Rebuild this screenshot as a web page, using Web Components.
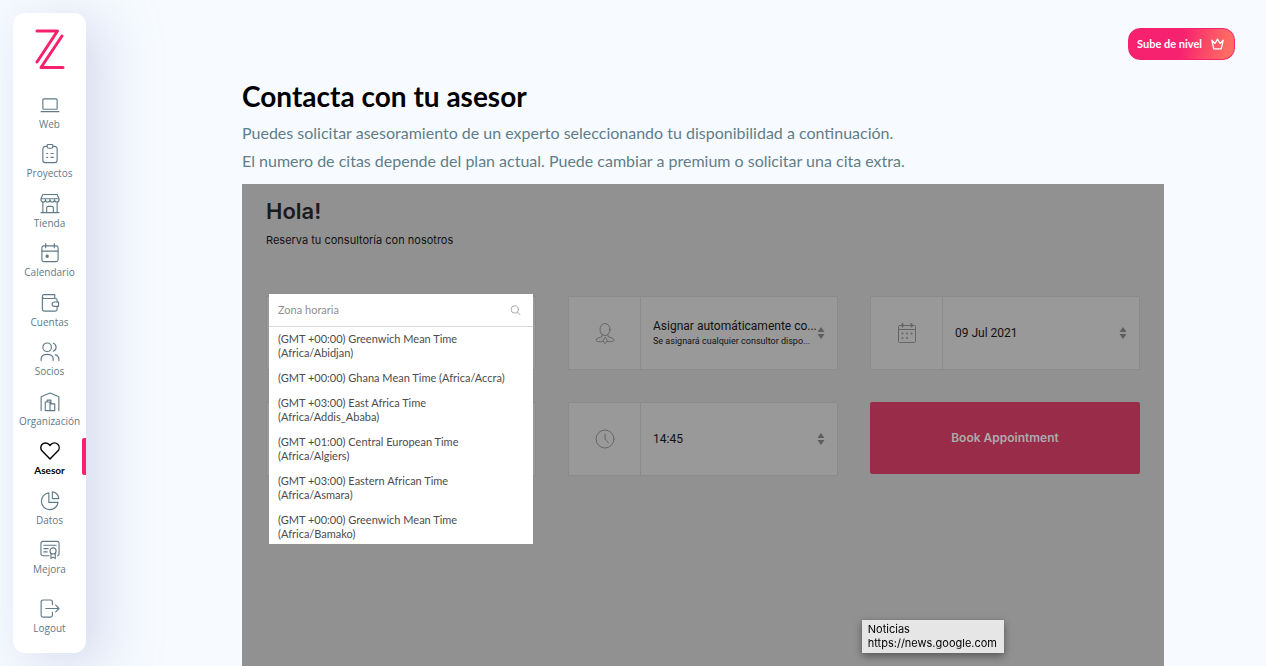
<!DOCTYPE html>
<html lang="es">
<head>
<meta charset="utf-8">
<title>Contacta con tu asesor</title>
<style>
  body { margin: 0; background: #f7fbff; font-family: Lato, "Open Sans", sans-serif; }
</style>
</head>
<body>
<app-shell>
  <side-bar slot="sidebar">
    <nav-item icon="web">Web</nav-item>
    <nav-item icon="proyectos">Proyectos</nav-item>
    <nav-item icon="tienda">Tienda</nav-item>
    <nav-item icon="calendario">Calendario</nav-item>
    <nav-item icon="cuentas">Cuentas</nav-item>
    <nav-item icon="socios">Socios</nav-item>
    <nav-item icon="organizacion">Organización</nav-item>
    <nav-item icon="asesor" active>Asesor</nav-item>
    <nav-item icon="datos">Datos</nav-item>
    <nav-item icon="mejora">Mejora</nav-item>
    <nav-item icon="logout" slot="footer">Logout</nav-item>
  </side-bar>
  <level-button slot="action">Sube de nivel</level-button>
  <page-heading>
    <span slot="title">Contacta con tu asesor</span>
    <p>Puedes solicitar asesoramiento de un experto seleccionando tu disponibilidad a continuación.</p>
    <p>El numero de citas depende del plan actual. Puede cambiar a premium o solicitar una cita extra.</p>
  </page-heading>
  <booking-panel>
    <span slot="title">Hola!</span>
    <span slot="intro">Reserva tu consultoría con nosotros</span>
    <booking-field label="Servicio"><zone-picker slot="popup"></zone-picker></booking-field>
    <booking-field icon="person" label="Consultor" value="Asignar automáticamente co..." note="Se asignará cualquier consultor dispo..."></booking-field>
    <booking-field icon="date" label="Fecha" value="09 Jul 2021"></booking-field>
    <booking-field label="Zona horaria"></booking-field>
    <booking-field icon="clock" label="Hora" value="14:45"></booking-field>
    <book-button>Book Appointment</book-button>
  </booking-panel>
</app-shell>
<link-tip>
  <span slot="title">Noticias</span>
  <span>https://news.google.com</span>
</link-tip>

<script>
const ICONS = {
  web: '<rect x="2.5" y="4" width="15" height="11" rx="1"/><path d="M.7 17.500h18.600"/>',
  proyectos: '<path d="M6.500 2.500H5A2.500 2.500 0 0 0 2.500 5v12A2.500 2.500 0 0 0 5 19.500h10a2.500 2.500 0 0 0 2.500-2.500V5A2.500 2.500 0 0 0 15 2.500h-1.500"/><path d="M7 1.800Q7 .5 8.300.5h3.400Q13 .5 13 1.800V3q0 1.500-1.500 1.500h-3Q7 4.500 7 3z"/><path d="M6.500 10h1M11 10h2.500M6.500 14h1M11 14h2.500"/>',
  tienda: '<path d="M2.500.5h15l2 4.500v1a2.300 2.300 0 0 1-4.750 0A2.300 2.300 0 0 1 10 6a2.300 2.300 0 0 1-4.750 0A2.300 2.300 0 0 1 .5 6V5zM.5 5h19M2.500 8.500v11M17.500 8.500v11M.5 19.500h19M6.500 19.500v-5q0-1.500 1.500-1.500h4q1.500 0 1.500 1.500v5"/>',
  calendario: '<rect x="1.500" y="3" width="17" height="16.500" rx="2"/><path d="M1.500 8.500h17M5.500.7V5M14.500.7V5"/><circle cx="7" cy="14" r="1.200" fill="currentColor"/>',
  cuentas: '<path d="M17.500 14v3a2 2 0 0 1-2 2H4a2 2 0 0 1-2-2V3.500A1.800 1.800 0 0 1 3.800 1.700H15v4.200M2 4q0 1.800 2 1.800h11.500a2 2 0 0 1 2 2v1.700"/><path d="M19 9.500h-4.500a2.200 2.200 0 0 0 0 4.500H19z"/>',
  socios: '<circle cx="7" cy="5.500" r="4.500"/><path d="M13.500 1.300a4.500 4.500 0 0 1 0 8.400M.7 19.500v-2.300q.5-4.200 6.300-4.200t6.300 4.200v2.300M15.500 13.500q3.800.8 3.800 4.500v1.500"/>',
  organizacion: '<path d="M.7 19.500V5L10 1l9.300 4v14.500M5 10.500h5v9H5zM10 12.500h5v7h-5M7 10.500v-2h4v4M5 19.500h10"/>',
  asesor: '<path d="M10 19 1.800 10.500A4.900 4.900 0 0 1 8.800 3.500L10 4.700l1.200-1.200a4.900 4.900 0 0 1 7 7z"/>',
  datos: '<path d="M8.800 2A8.800 8.800 0 1 0 18.500 12H8.800z"/><path d="M12.500.8v7.200h6.700A7.500 7.500 0 0 0 12.500.8z"/>',
  mejora: '<path d="M9 16.500H2.500a2 2 0 0 1-2-2V3.500a2 2 0 0 1 2-2h15a2 2 0 0 1 2 2v11q0 1.500-1.500 2M3.500 5.500h13M3.500 9H8M3.500 12.500h3.500"/><circle cx="13.200" cy="11.500" r="3.200"/><path d="M11 14v5.500l2.200-1.500 2.300 1.500V14"/>',
  logout: '<path d="M12.500 6V3a2 2 0 0 0-2-2H2.700a2 2 0 0 0-2 2v14a2 2 0 0 0 2 2h7.800a2 2 0 0 0 2-2v-3M5.500 10h14M16 6.500l3.500 3.500-3.500 3.500"/>',
  person: '<ellipse cx="10" cy="6.500" rx="5" ry="6"/><path d="M7 11.500v2C5 15 1.500 14.500 1 17c0 2 5 2 7 1.500M13 11.500v2c2 1.500 5.500 1 6 3.500 0 2-5 2-7 1.500M10 14.500l-2.200 3.500 2.200 2.700 2.200-2.700z"/>',
  date: '<path d="M2.500 2.500h15q1 0 1 1v15q0 1-1 1h-15q-1 0-1-1v-15q0-1 1-1zM1.500 6.500h17"/><path d="M5.500 1v2.500M14.500 1v2.500M5.500 10.500h.01M10 10.500h.01M14.500 10.500h.01M5.500 15h.01M10 15h.01" stroke-width="2"/>',
  clock: '<circle cx="10" cy="10" r="9"/><path d="M10 5v5l3.500 4"/>',
  search: '<circle cx="8.500" cy="8.500" r="7"/><path d="M13.500 13.500l5 5"/>',
  crown: '<path d="M2 4.500l2.800 12h10.400l2.800-12-4.500 4.500L10 3 6.500 9z"/>'
};
const icon = (name, width = 1.2) =>
  `<svg viewBox="0 0 20 21" fill="none" stroke="currentColor" stroke-width="${width}" stroke-linecap="round" stroke-linejoin="round" aria-hidden="true">${ICONS[name] || ''}</svg>`;

const define = (name, render) => customElements.define(name, class extends HTMLElement {
  constructor() { super(); this.attachShadow({ mode: 'open' }); }
  connectedCallback() { this.shadowRoot.innerHTML = render(this); }
});

define('app-shell', () => `
  <style>
    :host { display: grid; grid-template-columns: 86px minmax(0, 1fr); min-height: 100vh; }
    main { display: flex; flex-direction: column; }
    header { display: flex; justify-content: flex-end; padding: 28px 31px 19px; }
    .content { display: flex; flex: 1; flex-direction: column; padding: 0 102px 0 156px; }
  </style>
  <slot name="sidebar"></slot>
  <main>
    <header><slot name="action"></slot></header>
    <div class="content"><slot></slot></div>
  </main>`);

define('side-bar', () => `
  <style>
    :host { display: flex; box-sizing: border-box; height: 100vh; padding: 13px 0 13px 13px; position: sticky; top: 0; }
    aside { display: flex; flex: 1; flex-direction: column; box-sizing: border-box; padding: 16px 0; border-radius: 12px;
      background: #fff; box-shadow: 16px 10px 50px 4px rgba(188, 194, 226, .5); }
    .logo { display: block; height: 41px; margin-bottom: 22px; text-align: center; }
    .logo svg { width: 30px; height: 41px; }
    nav { display: flex; flex: 1; flex-direction: column; justify-content: space-between; margin-bottom: 18px; }
  </style>
  <aside>
    <a class="logo" href="#" aria-label="Inicio"><svg viewBox="0 0 30 41" fill="none" stroke="#f7226f" stroke-width="3" stroke-linecap="round" stroke-linejoin="round"><path d="M2 2h20.500L2 33M27 7 6 38.500h22"/></svg></a>
    <nav><slot></slot></nav>
    <slot name="footer"></slot>
  </aside>`);

define('nav-item', el => `
  <style>
    :host { display: block; color: #5f7a88; }
    :host([active]) { color: #000; font-weight: 700; }
    a { display: flex; flex-direction: column; align-items: center; padding-top: 3px; position: relative;
      color: inherit; text-decoration: none; font-size: 10px; line-height: 18px; font-family: "Open Sans", sans-serif; }
    svg { width: 20px; height: 20px; }
    :host([active]) span { font-family: Lato, sans-serif; }
    :host([active]) a::after { content: ""; position: absolute; top: 0; right: 0; width: 4px; height: 37px; border-radius: 2px 0 0 2px; background: #f7226f; }
  </style>
  <a href="#"${el.hasAttribute('active') ? ' aria-current="page"' : ''}>${icon(el.getAttribute('icon'), el.hasAttribute('active') ? 1.5 : 1.2)}<span><slot></slot></span></a>`);

define('level-button', () => `
  <style>
    button { display: flex; align-items: center; gap: 8px; height: 32px; padding: 0 9px 0 8px; border: 1px solid #f7226f; border-radius: 12px;
      background: linear-gradient(100deg, #f7226f 50%, #ff6b62 92%); color: #fff; font: 700 11px/16px Lato, sans-serif; }
    svg { width: 15px; height: 15px; }
  </style>
  <button type="button"><slot></slot>${icon('crown', 1.8)}</button>`);

define('page-heading', () => `
  <style>
    :host { display: block; margin-bottom: 9px; }
    h1 { margin: 0 0 6px; color: #000; font: 700 28px/34px Lato, sans-serif; }
    ::slotted(p) { margin: 0; color: #5f7d8a; font: 400 16px/28px Lato, sans-serif; }
  </style>
  <h1><slot name="title"></slot></h1>
  <slot></slot>`);

define('booking-panel', () => `
  <style>
    :host { display: block; flex: 1; padding: 12px 24px 24px; background: #919191; font-family: Inter, sans-serif; }
    h2 { margin: 0; color: #1b1b1b; font-size: 22px; font-weight: 600; line-height: 30px; }
    p { margin: 4px 0 46px; color: #111; font-size: 11px; line-height: 20px; }
    form { display: grid; grid-template-columns: repeat(3, minmax(0, 1fr)); gap: 32px; }
  </style>
  <h2><slot name="title"></slot></h2>
  <p><slot name="intro"></slot></p>
  <form><slot></slot></form>`);

define('booking-field', el => {
  const value = el.getAttribute('value') || '';
  const note = el.getAttribute('note');
  const label = el.getAttribute('label');
  const control = note
    ? `<button type="button" aria-haspopup="listbox" aria-label="${label}"><span>${value}</span><small>${note}</small></button>`
    : `<select aria-label="${label}"><option>${value}</option></select>`;
  return `
  <style>
    :host { display: block; position: relative; }
    .field { display: grid; grid-template-columns: 72px minmax(0, 1fr); box-sizing: border-box; height: 74px; border: 1px solid #8b8b8b; background: #999; }
    .mark { display: grid; place-items: center; border-right: 1px solid #8b8b8b; color: #666; }
    .mark svg { width: 20px; height: 21px; }
    .control { display: grid; grid-template-columns: minmax(0, 1fr) 8px; align-items: center; padding: 0 12px; }
    select, button { width: 100%; margin: 0; padding: 0; border: 0; background: none; appearance: none; color: #111; text-align: left; white-space: nowrap;
      font: 400 12px/16px Roboto, sans-serif; }
    select { height: 72px; }
    button span, small { display: block; }
    small { font-size: 9px; line-height: 14px; }
    .arrows { width: 8px; height: 12px; fill: #5e5e5e; }
  </style>
  <div class="field">
    <div class="mark">${icon(el.getAttribute('icon'), 1)}</div>
    <div class="control">${control}<svg class="arrows" viewBox="0 0 8 12" aria-hidden="true"><path d="M4 0l3.500 5h-7zM4 12L.5 7h7z"/></svg></div>
  </div>
  <slot name="popup"></slot>`;
});

const ZONES = [
  ['+00:00', 'Greenwich Mean Time', 'Africa/Abidjan'],
  ['+00:00', 'Ghana Mean Time', 'Africa/Accra'],
  ['+03:00', 'East Africa Time', 'Africa/Addis_Ababa'],
  ['+01:00', 'Central European Time', 'Africa/Algiers'],
  ['+03:00', 'Eastern African Time', 'Africa/Asmara'],
  ['+00:00', 'Greenwich Mean Time', 'Africa/Bamako']
];
define('zone-picker', () => `
  <style>
    :host { display: block; position: absolute; z-index: 1; top: -2px; left: 3px; right: 3px; box-sizing: border-box; height: 250px; overflow: hidden;
      background: #fff; color: #4c4c4c; font: 400 11px/14px Lato, sans-serif; }
    label { display: flex; align-items: center; height: 32px; padding: 0 12px 0 9px; border-bottom: 1px solid #dadada; color: #999; }
    input { flex: 1; min-width: 0; padding: 0; border: 0; outline: 0; background: none; font: inherit; color: #777; }
    input::placeholder { color: #8f8f8f; opacity: 1; }
    svg { width: 11px; height: 11px; }
    ul { margin: 0; padding: 0; list-style: none; }
    li { padding: 5px 9px 6px; }
  </style>
  <label>
    <input type="text" placeholder="Zona horaria" aria-label="Zona horaria">${icon('search', 1.6)}
  </label>
  <ul role="listbox" aria-label="Zonas horarias">
    ${ZONES.map(([offset, name, city]) => `<li role="option">(GMT ${offset}) ${name} (${city})</li>`).join('')}
  </ul>`);

define('book-button', () => `
  <style>
    button { display: block; width: 100%; height: 72px; border: 0; border-radius: 2px; background: #992d49; color: #ababab; font: 600 12px/16px Inter, sans-serif; }
  </style>
  <button type="submit"><slot></slot></button>`);

define('link-tip', () => `
  <style>
    :host { display: flex; flex-direction: column; position: fixed; right: 262px; bottom: 13px; padding: 2px 7px 3px 6px; background: #e6e6e6; color: #000;
      font: 400 11px/14px Inter, sans-serif; box-shadow: 0 0 1px #666, 0 3px 8px rgba(0, 0, 0, .4); }
  </style>
  <slot name="title"></slot><slot></slot>`);
</script>
</body>
</html>
